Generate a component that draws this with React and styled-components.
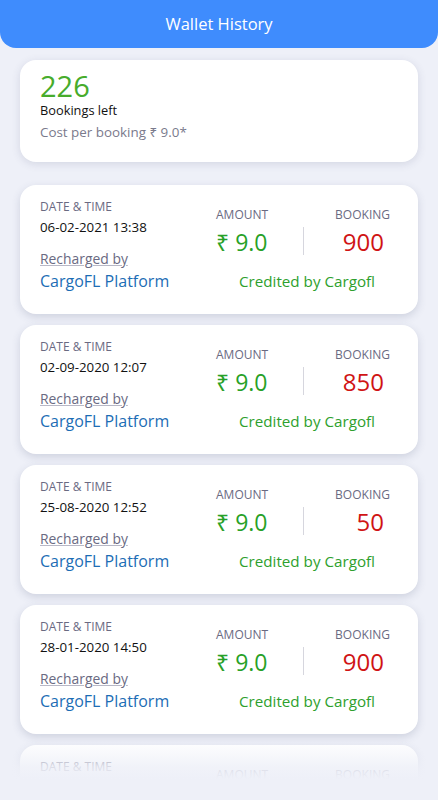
import React from "react";
import styled, { createGlobalStyle } from "styled-components";

const GlobalStyle = createGlobalStyle`
    html, body {
        margin: 0;
        padding: 0;
        background: #eef0f8;
        font-family: "Open Sans", "Noto Sans", sans-serif;
    }
    * { box-sizing: border-box; }
`

const history = [
    { date: '06-02-2021 13:38', amount: '9.0', booking: '900' },
    { date: '02-09-2020 12:07', amount: '9.0', booking: '850' },
    { date: '25-08-2020 12:52', amount: '9.0', booking: '50' },
    { date: '28-01-2020 14:50', amount: '9.0', booking: '900' },
    { date: '12-01-2020 10:15', amount: '9.0', booking: '900' },
]

const HistoryCard = ({ item }) => (
    <Card>
        <LeftCol>
            <Label>Date &amp; Time</Label>
            <DateText>{item.date}</DateText>
            <Recharged>Recharged by</Recharged>
            <Platform>CargoFL Platform</Platform>
        </LeftCol>
        <RightCol>
            <Stats>
                <Stat>
                    <Label>Amount</Label>
                    <Amount>₹ {item.amount}</Amount>
                </Stat>
                <Divider />
                <Stat align="flex-end">
                    <Label>Booking</Label>
                    <Booking>{item.booking}</Booking>
                </Stat>
            </Stats>
            <Credited>Credited by Cargofl</Credited>
        </RightCol>
    </Card>
)

const App = () => {
    return (
        <Page>
            <GlobalStyle />
            <Header>Wallet History</Header>
            <Content>
                <Summary>
                    <Count>226</Count>
                    <Left>Bookings left</Left>
                    <Cost>Cost per booking ₹ 9.0*</Cost>
                </Summary>
                <List>
                    {history.map((item, i) => <HistoryCard key={i} item={item} />)}
                </List>
            </Content>
            <Fade />
        </Page>
    )
}

export default App

const Page = styled.div`
    position: relative;
    width: 438px;
    height: 800px;
    overflow: hidden;
    background: #eef0f8;
`

const Header = styled.div`
    height: 48px;
    background: #3f8cfd;
    border-radius: 0 0 16px 16px;
    color: #fff;
    font-size: 16.5px;
    display: flex;
    align-items: center;
    justify-content: center;
    padding-bottom: 2px;
`

const Content = styled.div`
    padding: 12px 20px 0;
`

const Summary = styled.div`
    background: #fff;
    border-radius: 16px;
    height: 102px;
    padding: 11px 20px;
    box-shadow: 0 2px 8px rgba(60, 70, 110, 0.15);
`

const Count = styled.div`
    color: #47ac2c;
    font-size: 29px;
    line-height: 29px;
`

const Left = styled.div`
    color: #111;
    font-size: 12.8px;
    line-height: 16px;
    margin-top: 2px;
`

const Cost = styled.div`
    color: #7a7a8c;
    font-size: 13.4px;
    margin-top: 5px;
`

const List = styled.div`
    display: flex;
    flex-direction: column;
    gap: 11px;
    margin-top: 23px;
`

const Card = styled.div`
    background: #fff;
    border-radius: 16px;
    height: 129px;
    padding: 14px 28px 0 20px;
    display: flex;
    flex-shrink: 0;
    box-shadow: 0 3px 8px rgba(60, 70, 110, 0.18);
`

const LeftCol = styled.div`
    width: 176px;
    display: flex;
    flex-direction: column;
`

const Label = styled.div`
    color: #6a6a82;
    font-size: 12px;
    text-transform: uppercase;
    line-height: 16px;
`

const DateText = styled.div`
    color: #111;
    font-size: 13.3px;
    line-height: 18px;
    margin-top: 3px;
`

const Recharged = styled.div`
    color: #6a6a82;
    font-size: 13.9px;
    line-height: 18px;
    text-decoration: underline;
    text-decoration-color: #b8b8c6;
    margin-top: 14px;
`

const Platform = styled.div`
    color: #1c6db5;
    font-size: 16px;
    line-height: 22px;
    margin-top: 2px;
`

const RightCol = styled.div`
    flex: 1;
    display: flex;
    flex-direction: column;
    padding-top: 8px;
`

const Stats = styled.div`
    display: flex;
    align-items: flex-end;
`

const Stat = styled.div`
    display: flex;
    flex-direction: column;
    align-items: ${props => props.align || 'flex-start'};
    flex: 1;
`

const Divider = styled.div`
    width: 1px;
    height: 28px;
    background: #d6d6de;
    margin: 0 0 2px;
`

const Amount = styled.div`
    color: #27a127;
    font-size: 23px;
    line-height: 30px;
    margin-top: 4px;
`

const Booking = styled.div`
    color: #d01414;
    font-size: 24px;
    line-height: 30px;
    margin-top: 4px;
    padding-right: 6px;
`

const Credited = styled.div`
    color: #2ea02e;
    font-size: 15.2px;
    line-height: 20px;
    text-align: center;
    margin-top: 14px;
    padding-left: 8px;
`

const Fade = styled.div`
    position: absolute;
    left: 0;
    right: 0;
    bottom: 0;
    height: 60px;
    background: linear-gradient(to bottom, rgba(238, 240, 248, 0) 0%, rgba(238, 240, 248, 0.85) 45%, #eef0f8 65%);
`
